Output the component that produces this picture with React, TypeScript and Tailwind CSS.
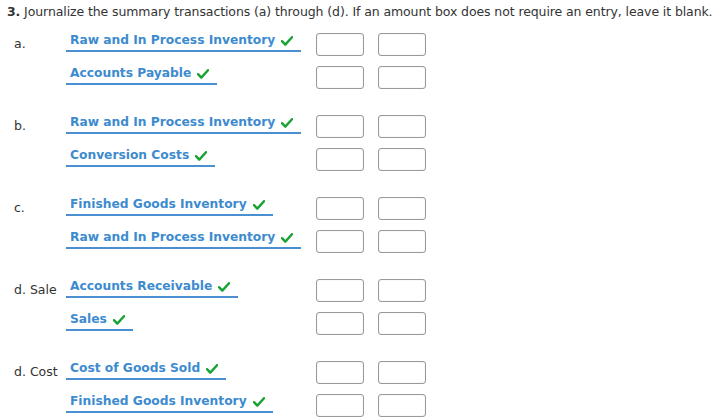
const groups = [
  { label: 'a.', rows: ['Raw and In Process Inventory', 'Accounts Payable'] },
  { label: 'b.', rows: ['Raw and In Process Inventory', 'Conversion Costs'] },
  { label: 'c.', rows: ['Finished Goods Inventory', 'Raw and In Process Inventory'] },
  { label: 'd. Sale', rows: ['Accounts Receivable', 'Sales'] },
  { label: 'd. Cost', rows: ['Cost of Goods Sold', 'Finished Goods Inventory'] },
];

const Check = () => (
  <svg width="12" height="10" viewBox="0 0 12 10" className="ml-[6px] mt-[4px] shrink-0">
    <path d="M1 5.2 L4.3 8.6 L11 1.2" fill="none" stroke="#17a232" strokeWidth="2.4" strokeLinecap="round" strokeLinejoin="round" />
  </svg>
);

const AmountBox = () => (
  <div className="h-[23px] w-[48px] rounded-[3px] border border-[#9a9a9a] bg-white shadow-[inset_0_0_1px_rgba(0,0,0,0.25)]" />
);

const EntryRow = ({ label, account }: { label?: string; account: string }) => (
  <div className="flex h-[33px] items-start">
    <div className="w-[66px] shrink-0 pl-[14px] pt-[8px] text-[12.5px] leading-[16px] text-[#333]">{label}</div>
    <div className="w-[250px] shrink-0 -mt-[1px]">
      <div className="inline-flex items-start border-b-2 border-[#4a90d0] pb-[2px] pl-[4px] pr-[8px]">
        <span className="text-[12.25px] font-bold leading-[16px] text-[#3d8bcf]">{account}</span>
        <Check />
      </div>
    </div>
    <div className="flex gap-[14px] pt-[5px]">
      <AmountBox />
      <AmountBox />
    </div>
  </div>
);

export default function App() {
  return (
    <div className="h-[420px] w-[715px] overflow-hidden bg-white font-['DejaVu_Sans',Verdana,sans-serif] text-[#333]">
      <div className="h-[28px] whitespace-nowrap pl-[7px] pt-[4px] text-[12.5px] leading-[16px] tracking-[-0.1px]">
        <span className="font-bold">3.</span> Journalize the summary transactions (a) through (d). If an amount box does not require an entry, leave it blank.
      </div>
      <div className="flex flex-col gap-[16px]">
        {groups.map((g, i) => (
          <div key={i}>
            <EntryRow label={g.label} account={g.rows[0]} />
            <EntryRow account={g.rows[1]} />
          </div>
        ))}
      </div>
    </div>
  );
}
